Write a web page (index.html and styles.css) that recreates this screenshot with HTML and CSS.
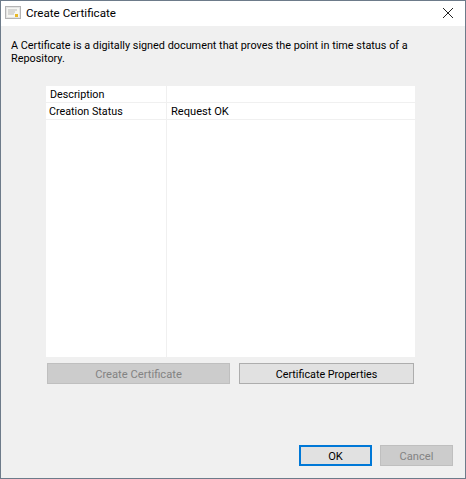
FILE: index.html
```html
<!DOCTYPE html>
<html lang="en">
<head>
<meta charset="utf-8">
<title>Create Certificate</title>
<link rel="stylesheet" href="styles.css">
</head>
<body>
<div class="window">
  <header class="titlebar">
    <svg class="app-icon" width="16" height="16" viewBox="0 0 16 16" aria-hidden="true">
      <rect x="0.5" y="1.5" width="15" height="12" fill="#e4e4e4" stroke="#b4b4b4"/>
      <rect x="2" y="3" width="12" height="9" fill="#f6f6f2"/>
      <path d="M3 5h9M3 7h7M3 9h6" stroke="#b9b9b9" fill="none"/>
      <rect x="10" y="9" width="3" height="3" fill="#e8b828"/>
    </svg>
    <span class="title">Create Certificate</span>
    <svg class="close" width="12" height="12" viewBox="0 0 12 12" aria-hidden="true">
      <path d="M1 1l10 10M11 1L1 11" stroke="#222" stroke-width="1" fill="none"/>
    </svg>
  </header>
  <main class="content">
    <p class="intro">A Certificate is a digitally signed document that proves the point in time status of a Repository.</p>
    <div class="grid">
      <div class="row"><div class="cell key">Description</div><div class="cell"></div></div>
      <div class="row"><div class="cell key second">Creation Status</div><div class="cell value">Request OK</div></div>
      <div class="row fill"><div class="cell key"></div><div class="cell"></div></div>
    </div>
    <div class="actions">
      <button class="btn wide-a" disabled>Create Certificate</button>
      <button class="btn wide-b">Certificate Properties</button>
    </div>
    <div class="footer">
      <button class="btn small primary">OK</button>
      <button class="btn small" disabled>Cancel</button>
    </div>
  </main>
</div>
</body>
</html>
```
FILE: styles.css
```css
* { box-sizing: border-box; }
html, body { margin: 0; height: 100%; }
body { font-family: Roboto, "Open Sans", sans-serif; font-size: 10.85px; color: #000; }
.window { width: 466px; height: 479px; border: 1px solid #6d7b8a; display: flex; flex-direction: column; background: #f0f0f0; }
.titlebar { height: 25px; flex: none; background: #fff; display: flex; align-items: center; padding: 0 11px 1px 4px; }
.app-icon { flex: none; }
.title { margin-left: 5px; flex: 1; font-size: 11.6px; }
.content { flex: 1; display: flex; flex-direction: column; padding: 13px 10px 12px; }
.intro { margin: 0; line-height: 13px; width: 420px; height: 26px; }
.grid { margin: 21px 0 0 35px; width: 369px; height: 271px; background: #fff; display: flex; flex-direction: column; font-size: 10.75px; }
.row { display: grid; grid-template-columns: 121px 1fr; height: 17px; border-bottom: 1px solid #f0f0f0; flex: none; }
.row.fill { flex: 1; border-bottom: 0; }
.cell { padding: 1px 0 0 4px; line-height: 16px; white-space: nowrap; }
.cell.key { border-right: 1px solid #f0f0f0; }
.cell.second { padding-left: 3px; }
.cell.value { font-size: 11.1px; }
.actions { display: flex; gap: 9px; margin: 6px 0 0 36px; }
.btn { height: 21px; font: inherit; font-size: 10.75px; color: #000; background: #e1e1e1; border: 1px solid #adadad; padding: 1px 0 0; }
.btn:disabled { background: #cccccc; border-color: #bfbfbf; color: #838383; }
.wide-a { width: 183px; font-size: 11.2px; }
.wide-b { width: 175px; }
.footer { margin-top: auto; display: flex; justify-content: flex-end; gap: 8px; padding-right: 2px; }
.small { width: 73px; height: 21px; font-size: 11.1px; }
.primary { border: 2px solid #0078d7; }
```
